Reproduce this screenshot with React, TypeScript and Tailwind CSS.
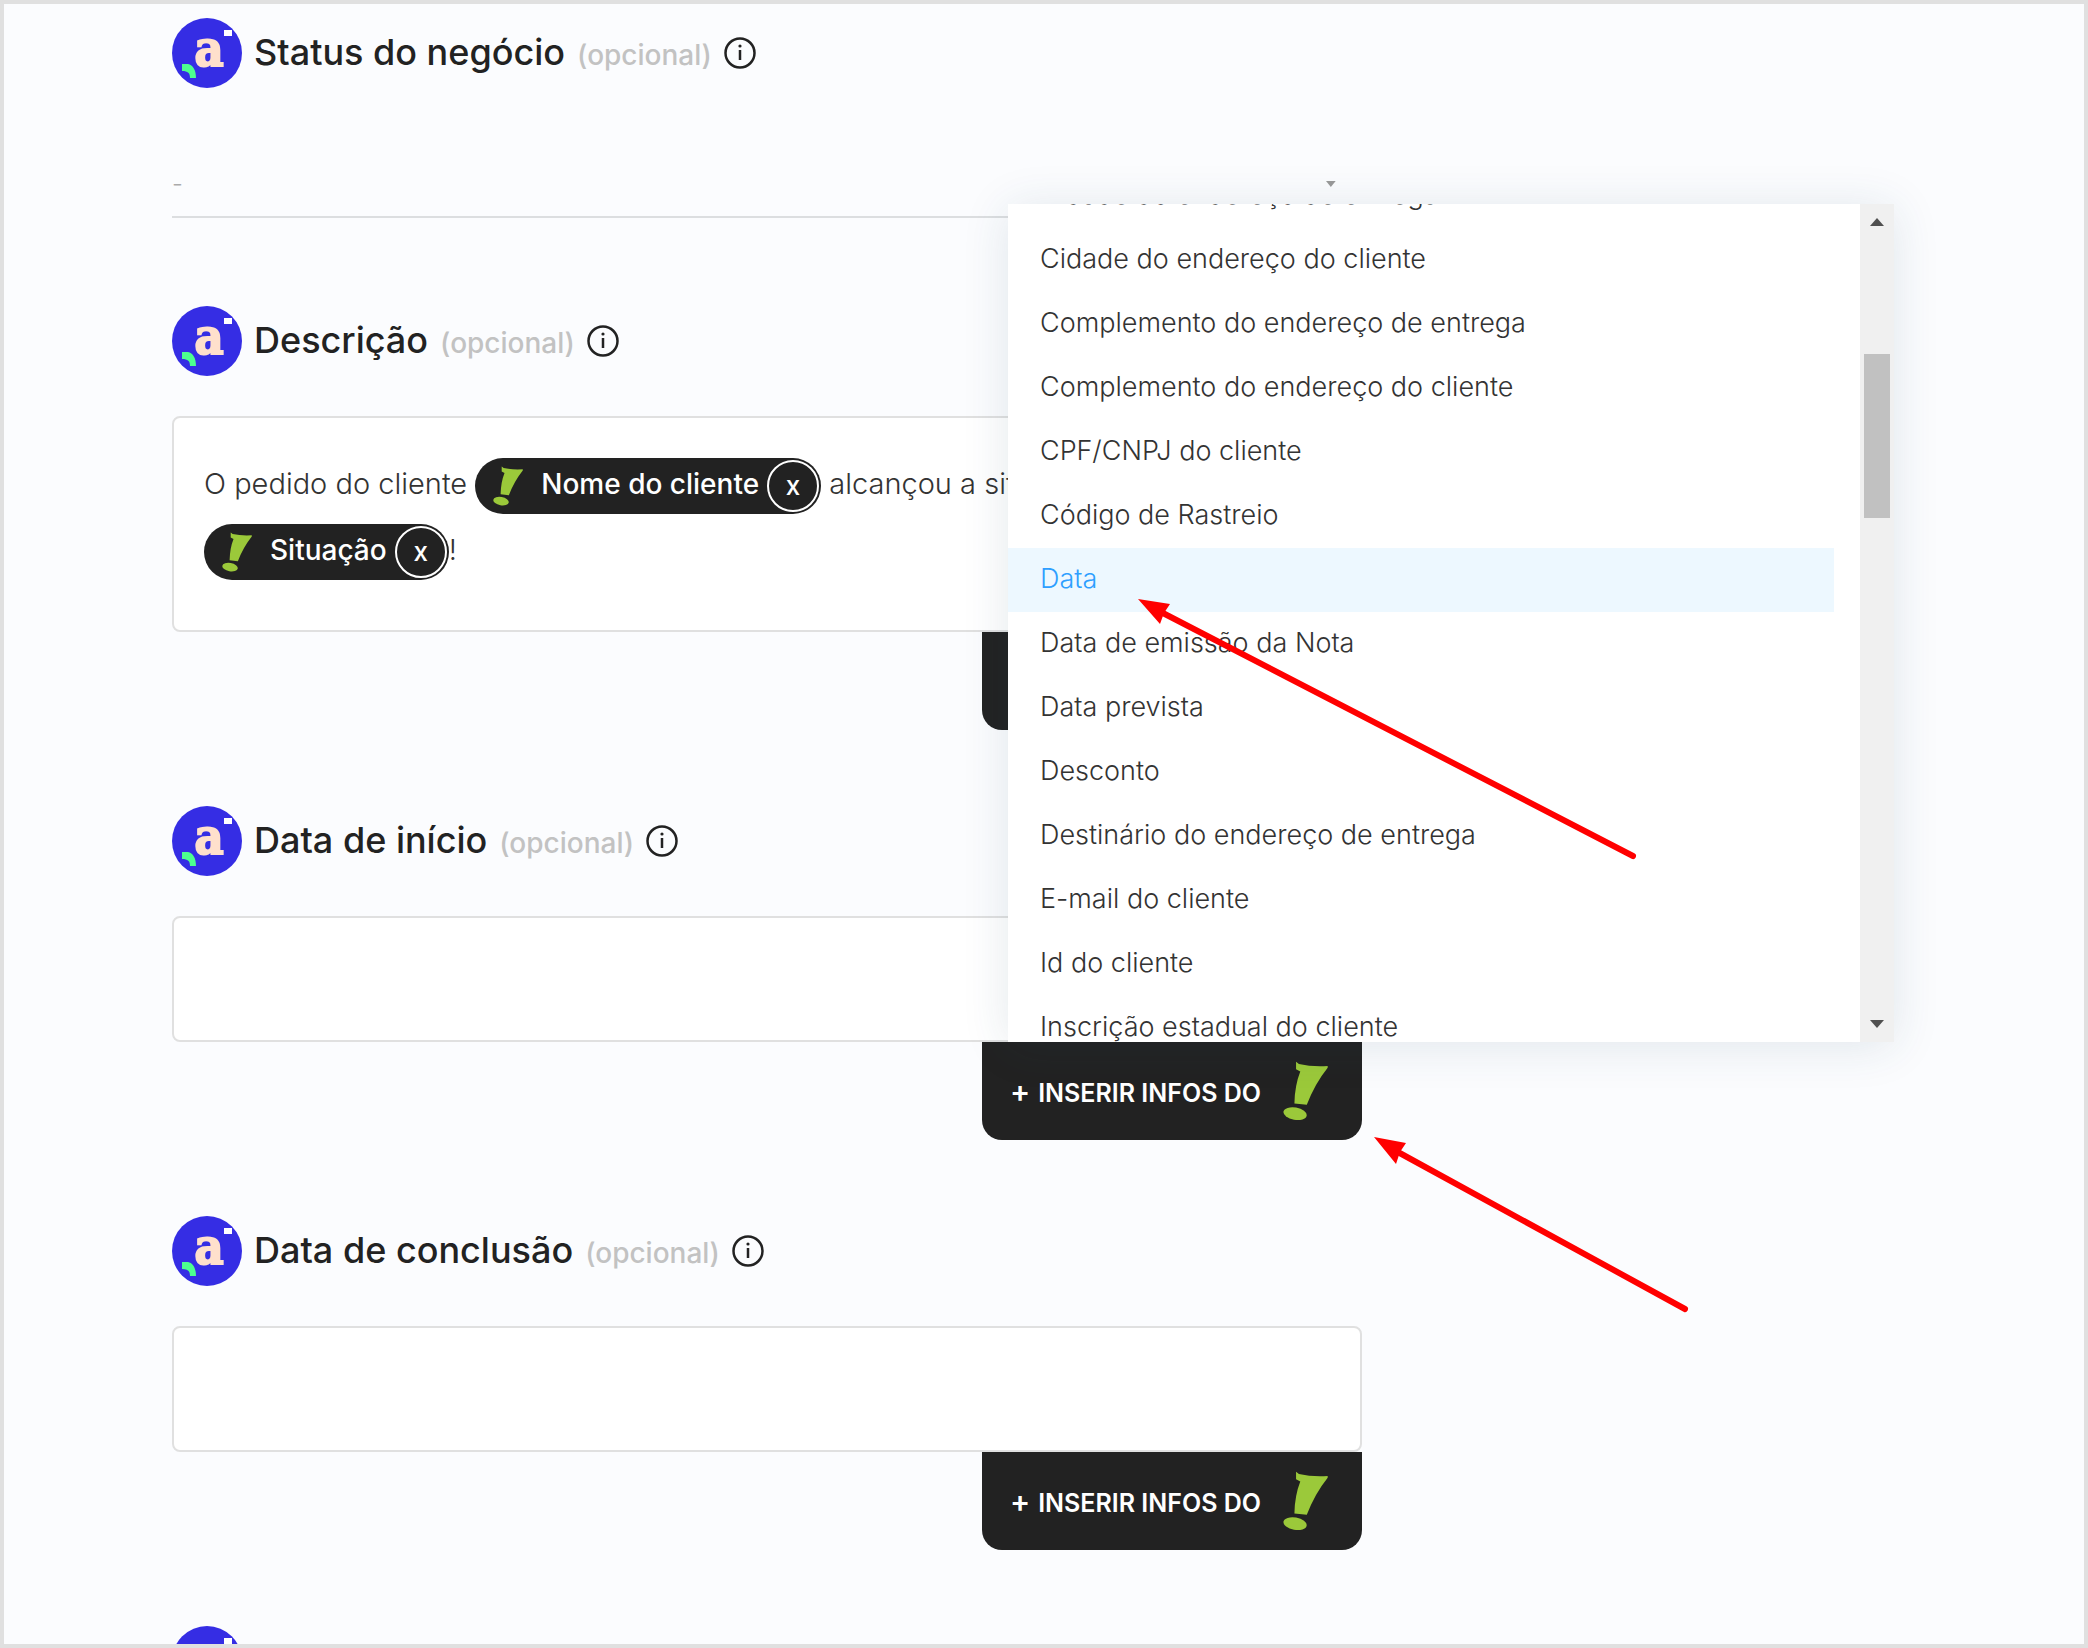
import { useState } from 'react';
import type { ReactNode } from 'react';

const OPTIONS = [
  'Cidade do endereço de entrega',
  'Cidade do endereço do cliente',
  'Complemento do endereço de entrega',
  'Complemento do endereço do cliente',
  'CPF/CNPJ do cliente',
  'Código de Rastreio',
  'Data',
  'Data de emissão da Nota',
  'Data prevista',
  'Desconto',
  'Destinário do endereço de entrega',
  'E-mail do cliente',
  'Id do cliente',
  'Inscrição estadual do cliente',
];

function Logo() {
  return (
    <svg viewBox="0 0 70 70" className="size-[70px] shrink-0" aria-hidden="true">
      <circle cx="35" cy="35" r="35" fill="#352de4" />
      <text x="37" y="48" textAnchor="middle" fontSize="50" fontWeight="700" fill="#ffe0cc" stroke="#ffe0cc" strokeWidth="2" style={{ fontFamily: '"DejaVu Serif Condensed", "DejaVu Serif", serif' }}>a</text>
      <rect x="52" y="12" width="8" height="6" fill="#fff" />
      <path d="M10 46h6c5 1 8 6 8 14h-6c0-5-2-7-8-7z" fill="#4dff8f" />
    </svg>
  );
}

function Exclamation({ className }: { className: string }) {
  return (
    <svg viewBox="8 5 138 183" className={className} aria-hidden="true">
      <path d="M48 7l9 7q40 9 88 6v5Q105 75 81 139l-38-4Q44 80 61 37l-13-7z" fill="#9bc93a" />
      <ellipse cx="45" cy="166" rx="36" ry="19" transform="rotate(10 45 166)" fill="#9bc93a" />
    </svg>
  );
}

function InfoIcon() {
  return (
    <svg viewBox="0 0 32 32" className="size-8" aria-hidden="true">
      <circle cx="16" cy="16" r="14.5" fill="none" stroke="#222" strokeWidth="2.5" />
      <path d="M16 13v10" stroke="#222" strokeWidth="2.5" />
      <circle cx="16" cy="9" r="1.6" fill="#222" />
    </svg>
  );
}

function FieldHeader({ id, title }: { id: string; title: string }) {
  return (
    <div className="flex items-center">
      <Logo />
      <label id={`${id}-label`} htmlFor={id} className="ml-3 pb-0.5 text-4xl leading-[44px] font-medium text-[#222]">{title}</label>
      <span className="ml-3 pt-1 text-[28px] leading-9 font-medium text-[#c2c2c2]">(opcional)</span>
      <button type="button" aria-label={`Sobre ${title}`} className="ml-3"><InfoIcon /></button>
    </div>
  );
}

function Chip({ children }: { children: ReactNode }) {
  return (
    <span className="inline-flex h-14 items-center rounded-full bg-[#222] pl-[18px] align-middle text-[28px] leading-8 font-medium text-white">
      <Exclamation className="h-10 w-[30px]" />
      <span className="mr-2 ml-[18px] pb-1">{children}</span>
      <button type="button" aria-label={`Remover ${children}`} className="mr-0.5 size-[52px] rounded-full border-2 border-white text-[26px] leading-none">x</button>
    </span>
  );
}

function InsertButton({ onClick, children }: { onClick?: () => void; children?: ReactNode }) {
  return (
    <div className="relative ml-auto w-[380px]">
      <button type="button" onClick={onClick} className="flex h-[98px] w-full items-center rounded-b-[20px] bg-[#222] pr-[34px] pl-7 text-[25px] font-semibold whitespace-nowrap text-white">
        <span className="mr-2 text-3xl">+</span>
        <span className="pt-1.5">INSERIR INFOS DO</span>
        <Exclamation className="ml-auto h-[60px] w-[45px]" />
      </button>
      {children}
    </div>
  );
}

function OptionsMenu({ selected, onSelect }: { selected: string; onSelect: (o: string) => void }) {
  return (
    <div className="absolute bottom-full left-[26px] z-10 flex h-[838px] w-[886px] overflow-hidden bg-white shadow-[0_4px_44px_rgba(30,70,100,0.12)]">
      <ul role="listbox" aria-label="Informações" className="-mt-10 flex-1 pr-[26px]">
        {OPTIONS.map((o) => (
          <li key={o} role="option" aria-selected={o === selected}>
            <button
              type="button"
              onClick={() => onSelect(o)}
              className={`block h-16 w-full px-8 pb-0.5 text-left text-[27px] font-light ${o === selected ? 'bg-[#edf8ff] text-[#2e9fff]' : 'text-[#333]'}`}
            >
              {o}
            </button>
          </li>
        ))}
      </ul>
      {/* Scrollbar */}
      <div className="flex w-[34px] flex-col items-center bg-[#f0f0f0] py-3.5">
        <svg viewBox="0 0 14 8" className="h-2 w-3.5"><path d="M7 0l7 8H0z" fill="#505050" /></svg>
        <div className="mt-32 h-[164px] w-[26px] bg-[#c1c1c1]" />
        <svg viewBox="0 0 14 8" className="mt-auto h-2 w-3.5"><path d="M7 8l7-8H0z" fill="#505050" /></svg>
      </div>
    </div>
  );
}

function Arrows() {
  return (
    <svg viewBox="0 0 560 720" className="pointer-events-none absolute top-[589px] left-[1127px] z-20 h-[720px] w-[560px]" aria-hidden="true">
      <g stroke="#f00" strokeWidth="6" strokeLinecap="round" fill="#f00">
        <path d="M28 18L502 263" />
        <path d="M265 558L554 716" />
        <path stroke="none" d="M7 6l32 5-6 9-4 11zM243 544l32 6-6 9-4 12z" />
      </g>
    </svg>
  );
}

export default function App() {
  const [menuOpen, setMenuOpen] = useState(true);
  const [selected, setSelected] = useState('Data');

  return (
    <main className="relative h-screen overflow-hidden border-4 border-[#e0e0e0] bg-[#fbfcfe] pt-3.5 pl-[168px] font-['Inter',sans-serif]">
      <form className="flex w-full max-w-[1190px] flex-col">
        <section>
          <FieldHeader id="status" title="Status do negócio" />
          <div className="mt-16 flex h-[66px] items-center border-b-2 border-[#dcdee0]">
            <select id="status" className="w-full appearance-none bg-transparent text-2xl font-light text-[#aaa]">
              <option>-</option>
            </select>
            <svg viewBox="0 0 10 6" className="mr-[26px] h-1.5 w-2.5"><path d="M0 0h10L5 6z" fill="#999" /></svg>
          </div>
        </section>

        <section className="mt-[88px]">
          <FieldHeader id="descricao" title="Descrição" />
          <div
            id="descricao"
            role="textbox"
            aria-labelledby="descricao-label"
            className="mt-10 h-[216px] rounded-lg border-2 border-[#e0e0e0] bg-white px-[30px] pt-[33px] text-[29px] leading-[66px] font-light text-[#333]"
          >
            O pedido do cliente <Chip>Nome do cliente</Chip> alcançou a situação<br />
            <Chip>Situação</Chip>!
          </div>
          <InsertButton />
        </section>

        <section className="mt-[76px]">
          <FieldHeader id="inicio" title="Data de início" />
          <textarea id="inicio" className="mt-10 block h-[126px] w-full resize-none rounded-lg border-2 border-[#e0e0e0] bg-white p-[30px] text-[26px]" />
          <InsertButton onClick={() => setMenuOpen(!menuOpen)}>
            {menuOpen && <OptionsMenu selected={selected} onSelect={setSelected} />}
          </InsertButton>
        </section>

        <section className="mt-[76px]">
          <FieldHeader id="conclusao" title="Data de conclusão" />
          <textarea id="conclusao" className="mt-10 block h-[126px] w-full resize-none rounded-lg border-2 border-[#e0e0e0] bg-white p-[30px] text-[26px]" />
          <InsertButton />
        </section>

        <section className="mt-[76px]">
          <Logo />
        </section>
      </form>
      <Arrows />
    </main>
  );
}
